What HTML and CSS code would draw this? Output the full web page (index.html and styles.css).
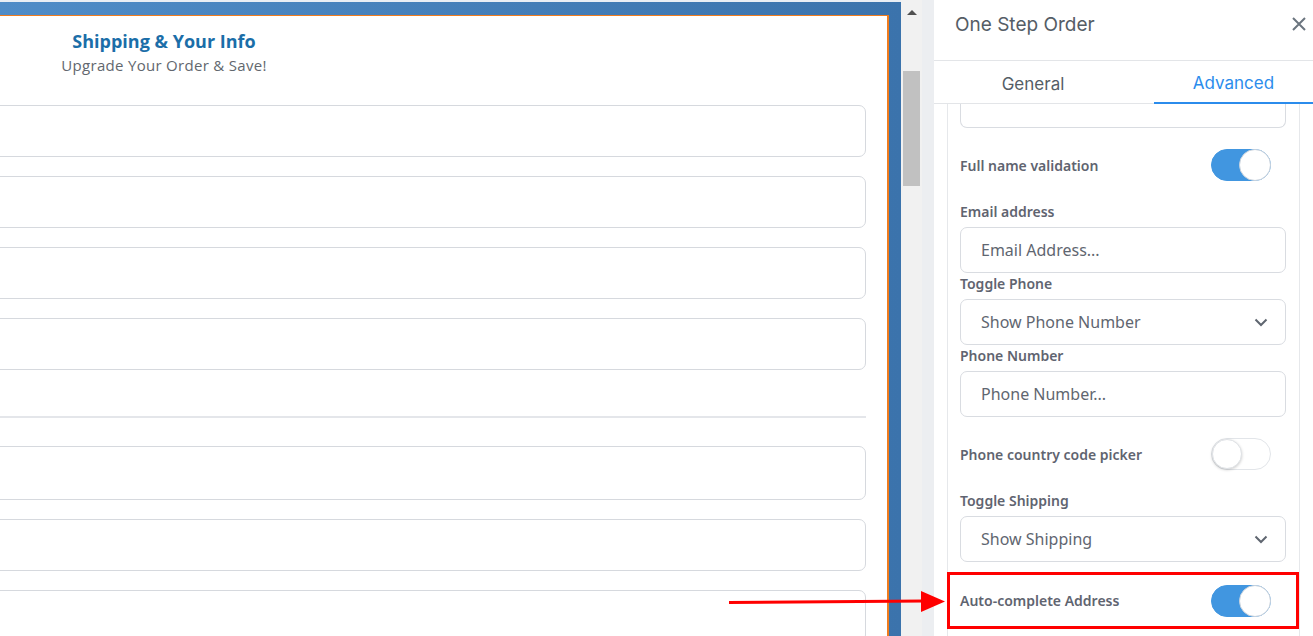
FILE: index.html
```html
<!DOCTYPE html>
<html>
<head>
    <title>One Step Order</title>
    <link rel="stylesheet" href="styles.css">
</head>
<body>
    <div class="preview">
        <div class="card">
            <div class="intro">
                <h2>Shipping &amp; Your Info</h2>
                <p>Upgrade Your Order &amp; Save!</p>
            </div>
            <div class="field"></div>
            <div class="field"></div>
            <div class="field"></div>
            <div class="field"></div>
            <div class="divider"></div>
            <div class="field tall"></div>
            <div class="field"></div>
            <div class="field"></div>
        </div>
    </div>

    <div class="scrollbar">
        <div class="scroll-up"></div>
        <div class="scroll-thumb"></div>
    </div>
    <div class="gutter"></div>

    <div class="panel">
        <div class="panel-head">
            <span class="panel-title">One Step Order</span>
            <svg class="close" width="16" height="16" viewBox="0 0 16 16"><path d="M2 2L14 14M14 2L2 14" stroke="#6b757f" stroke-width="2" fill="none"/></svg>
        </div>
        <div class="tabs">
            <div class="tab">General</div>
            <div class="tab active">Advanced</div>
        </div>
        <div class="settings">
            <div class="input cut"></div>

            <div class="row">
                <label>Full name validation</label>
                <span class="switch on"></span>
            </div>

            <label class="caption">Email address</label>
            <div class="input">Email Address...</div>

            <label class="caption">Toggle Phone</label>
            <div class="input select">Show Phone Number
                <svg width="14" height="9" viewBox="0 0 14 9"><path d="M1.5 1.5L7 7L12.5 1.5" stroke="#5f6670" stroke-width="2" fill="none"/></svg>
            </div>

            <label class="caption">Phone Number</label>
            <div class="input">Phone Number...</div>

            <div class="row">
                <label>Phone country code picker</label>
                <span class="switch"></span>
            </div>

            <label class="caption spaced">Toggle Shipping</label>
            <div class="input select">Show Shipping
                <svg width="14" height="9" viewBox="0 0 14 9"><path d="M1.5 1.5L7 7L12.5 1.5" stroke="#5f6670" stroke-width="2" fill="none"/></svg>
            </div>

            <div class="row marked">
                <label>Auto-complete Address</label>
                <span class="switch on"></span>
            </div>
        </div>
    </div>

    <!-- annotation arrow -->
    <svg class="pointer" width="222" height="24" viewBox="0 0 222 24">
        <path d="M1 12.5L196 11" stroke="#f00" stroke-width="3" fill="none"/>
        <path d="M193 1L217 11.5L193 22Z" fill="#f00"/>
    </svg>
</body>
</html>
```

FILE: styles.css
```css
body { margin: 0; height: 636px; overflow: hidden; display: flex; background: #fff; font-family: "Noto Sans", sans-serif; }

.preview { width: 901px; flex-shrink: 0; box-sizing: border-box; padding: 13px 12px 0 0; background: linear-gradient(to right, #4f8cc7, #3b73ac); border-top: 2px solid #e9eef4; }
.card { height: 100%; background: #fff; border-top: 1px solid #f07c1e; border-right: 2px solid #f07c1e; padding-top: 13px; overflow: hidden; }
.intro { width: 328px; text-align: center; margin-bottom: 30px; }
.intro h2 { margin: 0; font-family: "Open Sans", sans-serif; font-size: 18px; line-height: 24px; font-weight: 700; color: #1b6ea8; }
.intro p { margin: 2px 0 0; font-family: "Open Sans", sans-serif; font-size: 15px; line-height: 20px; color: #62676e; letter-spacing: 0.3px; }
.field { height: 52px; box-sizing: border-box; margin: 0 21px 19px -20px; border: 1px solid #d6d9de; border-radius: 7px; }
.field.tall { height: 54px; }
.divider { height: 2px; background: #e4e6ea; margin: 46px 21px 28px -20px; }

.scrollbar { width: 21px; flex-shrink: 0; background: #f1f1f1; }
.scroll-up { width: 0; height: 0; margin: 10px auto 0; border-left: 5px solid transparent; border-right: 5px solid transparent; border-bottom: 5px solid #505050; }
.scroll-thumb { margin: 56px 2px 0; height: 115px; background: #c1c1c1; }
.gutter { width: 12px; flex-shrink: 0; background: #eceef1; }

.panel { flex: 1; background: #fff; display: flex; flex-direction: column; }
.panel-head { height: 61px; box-sizing: border-box; display: flex; align-items: flex-start; justify-content: space-between; padding: 12px 6px 0 21px; border-bottom: 1px solid #e3e5e8; }
.panel-title { font-family: Inter, sans-serif; font-size: 19px; line-height: 26px; color: #555d66; }
.close { margin-top: 4px; }
.tabs { display: flex; height: 43px; box-sizing: border-box; padding-top: 3px; border-bottom: 1px solid #e3e5e8; }
.tab { font-family: Inter, sans-serif; font-size: 17px; color: #555d66; display: flex; align-items: center; justify-content: center; }
.tab:first-child { width: 198px; margin-right: 22px; }
.tab.active { flex: 1; color: #2b8cec; border-bottom: 2px solid #2b8cec; margin-bottom: -1px; }

.settings { flex: 1; margin: 0 13px; padding: 0 13px 0 12px; border-left: 1px solid #e6e8eb; border-right: 1px solid #e6e8eb; }
.input { height: 46px; box-sizing: border-box; border: 1px solid #d9dce1; border-radius: 7px; padding-left: 20px; display: flex; align-items: center; font-size: 16px; color: #5f6670; }
.input.cut { height: 24px; border-top: none; border-radius: 0 0 7px 7px; }
.select { justify-content: space-between; padding-right: 17px; }
.caption { display: block; font-size: 14px; line-height: 20px; font-weight: 600; color: #5f6470; margin: 1px 0 5px; }
.caption.spaced { margin-top: 0; }
.row { display: flex; align-items: center; justify-content: space-between; height: 32px; margin: 21px 15px 21px 0; }
.row label { font-size: 14px; font-weight: 600; color: #5f6470; }
.row.marked { height: 51px; margin: 10px -13px 0 -13px; border: 3px solid #f00; padding: 0 25px 0 10px; }

.switch { width: 60px; height: 32px; box-sizing: border-box; border-radius: 16px; border: 1px solid #e2e5e9; background: #fff; position: relative; }
.switch::after { content: ""; position: absolute; top: 0; left: 0; width: 30px; height: 30px; box-sizing: border-box; border-radius: 50%; background: #fff; border: 1px solid #dfe2e6; box-shadow: 0 1px 3px rgba(0,0,0,0.2); }
.switch.on { background: #4196e0; border-color: #4196e0; }
.switch.on::after { left: auto; right: -1px; top: -1px; width: 32px; height: 32px; border: 1px solid #c9d2dc; box-shadow: none; }

.pointer { position: absolute; left: 728px; top: 590px; }
```
